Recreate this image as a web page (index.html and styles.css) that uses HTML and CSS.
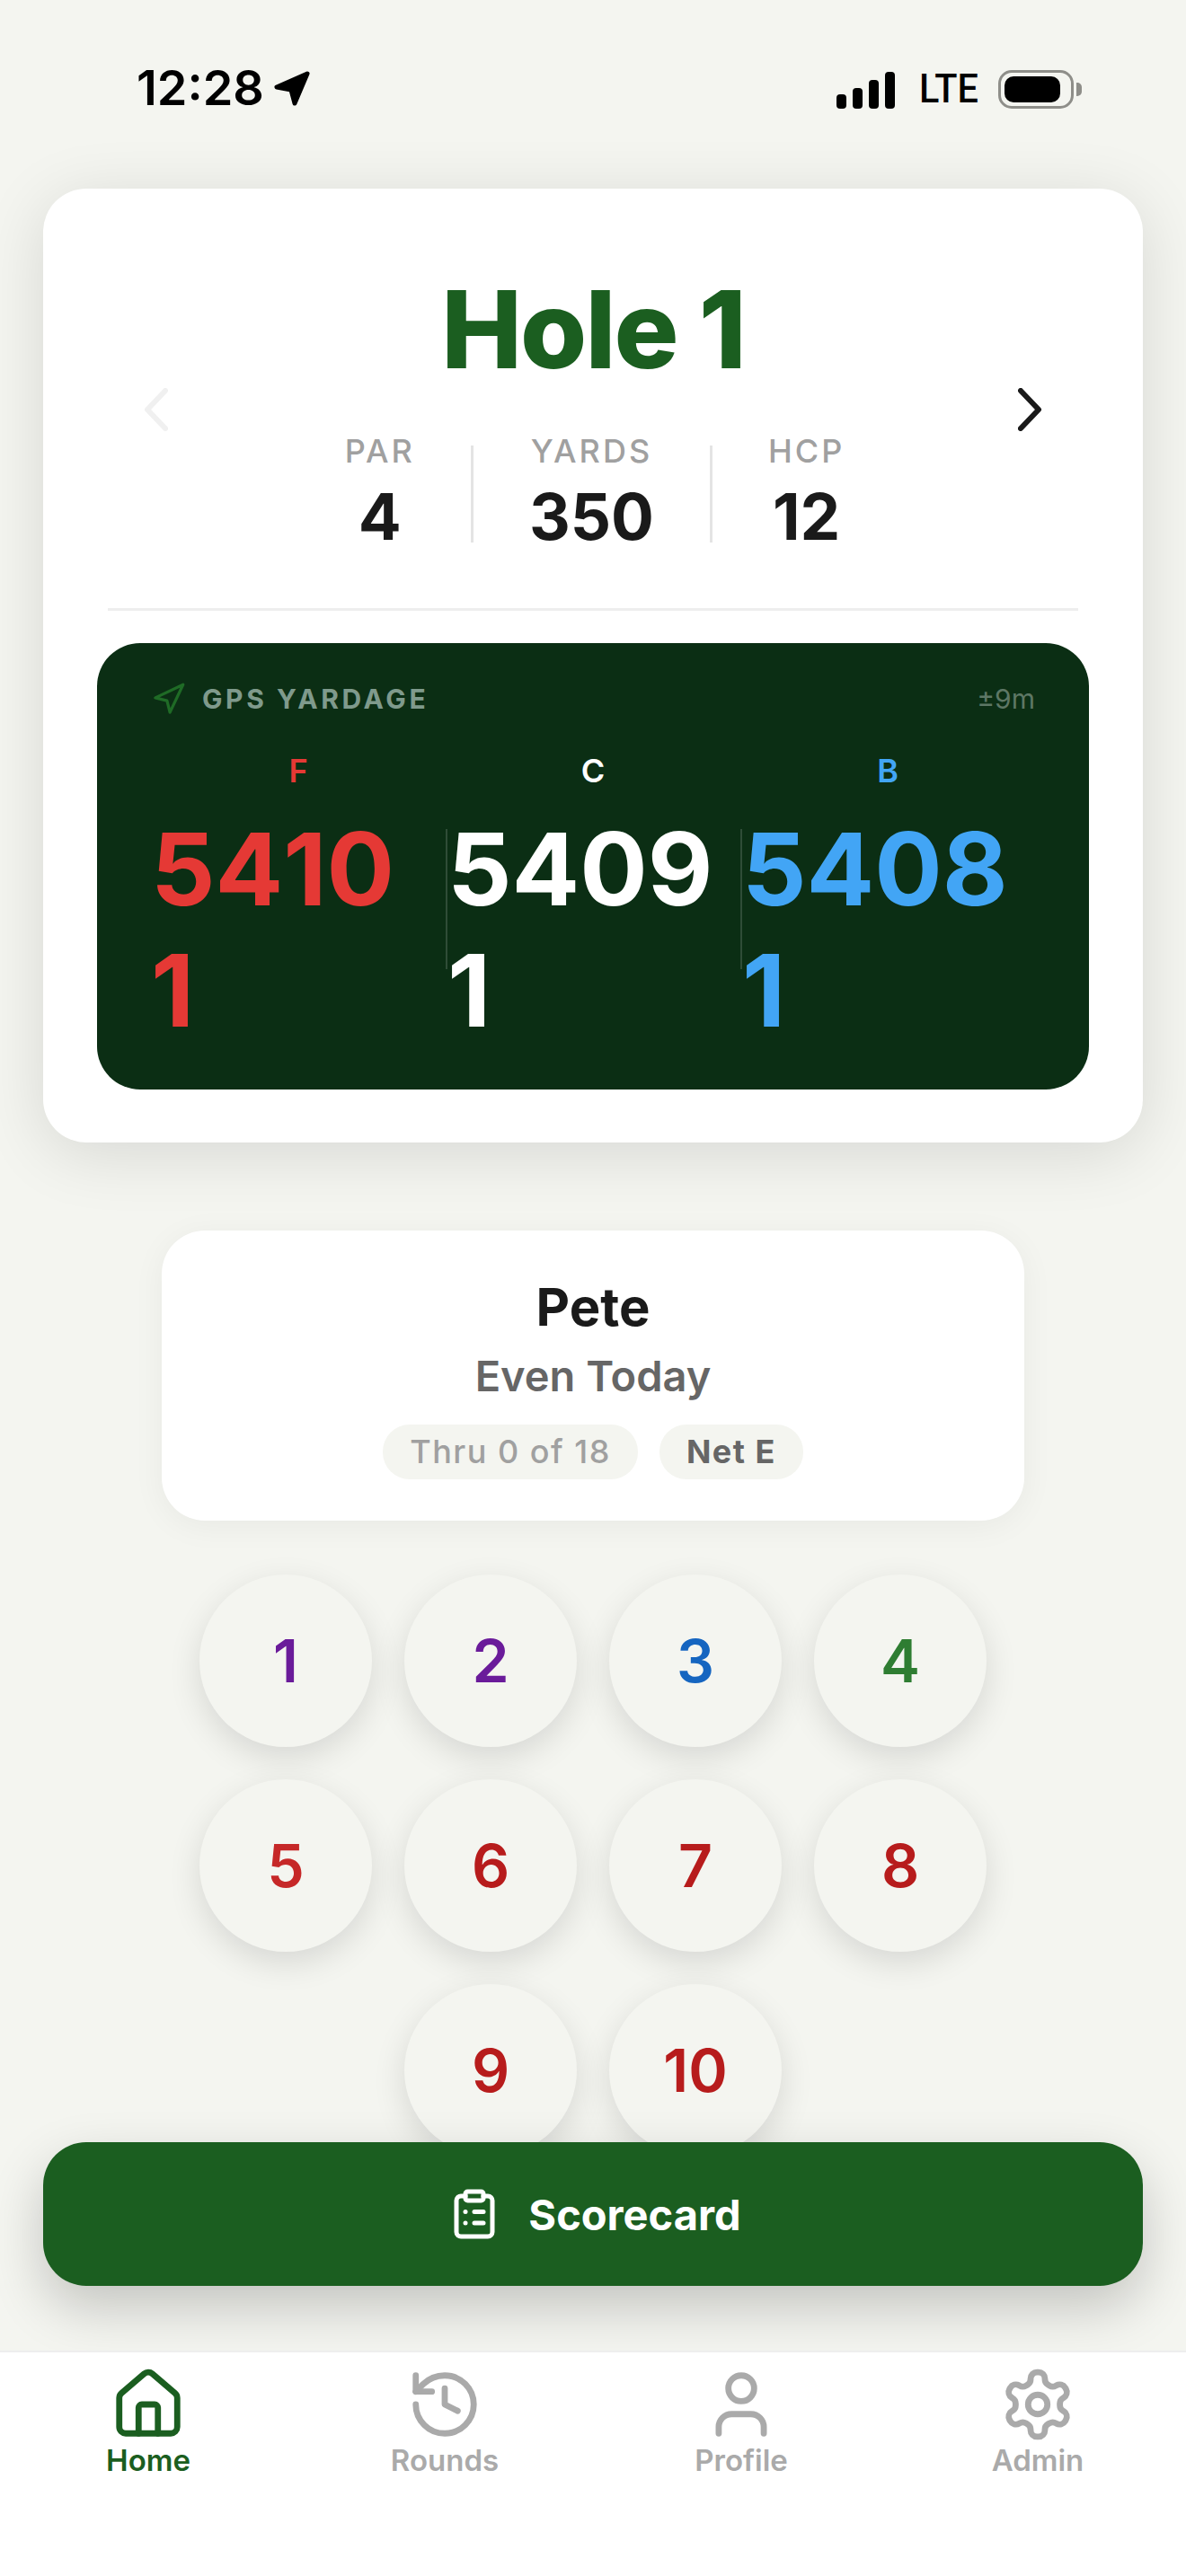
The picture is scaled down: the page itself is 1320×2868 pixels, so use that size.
FILE: index.html
```html
<!DOCTYPE html>
<html lang="en">
<head>
    <meta charset="UTF-8">
    <meta name="viewport" content="width=device-width, initial-scale=1.0">
    <title>Hole 1</title>
    <link rel="stylesheet" href="styles.css">
</head>
<body>
    <div class="screen">
        <main class="content">
            <div class="status-bar">
                <div class="status-left">
                    <span class="clock">12:28</span>
                    <svg class="loc-arrow" viewBox="0 0 42 42"><polygon points="38,5 4,20 20,23 24,38"/></svg>
                </div>
                <div class="status-right">
                    <div class="signal">
                        <span class="bar bar-1"></span>
                        <span class="bar bar-2"></span>
                        <span class="bar bar-3"></span>
                        <span class="bar bar-4"></span>
                    </div>
                    <span class="lte">LTE</span>
                    <div class="battery"><span class="battery-level"></span></div>
                    <span class="battery-nub"></span>
                </div>
            </div>

            <section class="hole-card">
                <svg class="chevron chevron-prev" viewBox="0 0 27 48"><path d="M24 3 L4 24 L24 45"/></svg>
                <svg class="chevron chevron-next" viewBox="0 0 27 48"><path d="M3 3 L23 24 L3 45"/></svg>

                <h1 class="hole-title">Hole 1</h1>

                <div class="stats">
                    <div class="stat">
                        <div class="stat-label">PAR</div>
                        <div class="stat-value">4</div>
                    </div>
                    <div class="stat-divider"></div>
                    <div class="stat">
                        <div class="stat-label">YARDS</div>
                        <div class="stat-value">350</div>
                    </div>
                    <div class="stat-divider"></div>
                    <div class="stat">
                        <div class="stat-label">HCP</div>
                        <div class="stat-value">12</div>
                    </div>
                </div>

                <div class="hole-rule"></div>

                <div class="gps-card">
                    <div class="gps-head">
                        <div class="gps-title">
                            <svg class="gps-icon" viewBox="0 0 24 24"><polygon points="3 11 22 2 13 21 11 13 3 11"/></svg>
                            <span>GPS YARDAGE</span>
                        </div>
                        <span class="gps-accuracy">±9m</span>
                    </div>
                    <div class="gps-labels">
                        <span class="gps-label front">F</span>
                        <span class="gps-label center">C</span>
                        <span class="gps-label back">B</span>
                    </div>
                    <div class="gps-row">
                        <div class="gps-col"><div class="gps-num front">54101</div></div>
                        <div class="gps-col"><div class="gps-num center">54091</div></div>
                        <div class="gps-col"><div class="gps-num back">54081</div></div>
                    </div>
                </div>
            </section>

            <section class="player-card">
                <div class="player-name">Pete</div>
                <div class="player-score">Even Today</div>
                <div class="pills">
                    <span class="pill">Thru 0 of 18</span>
                    <span class="pill pill-net">Net E</span>
                </div>
            </section>

            <div class="score-pad">
                <button class="score-btn purple">1</button>
                <button class="score-btn purple">2</button>
                <button class="score-btn blue">3</button>
                <button class="score-btn green">4</button>
                <button class="score-btn red-light">5</button>
                <button class="score-btn red">6</button>
                <button class="score-btn red">7</button>
                <button class="score-btn red">8</button>
                <button class="score-btn red">9</button>
                <button class="score-btn red">10</button>
            </div>

            <button class="scorecard-btn">
                <svg class="scorecard-icon" viewBox="0 0 24 24">
                    <rect x="8" y="2" width="8" height="4" rx="1"/>
                    <path d="M16 4h2a2 2 0 0 1 2 2v14a2 2 0 0 1-2 2H6a2 2 0 0 1-2-2V6a2 2 0 0 1 2-2h2"/>
                    <path d="M12 11h4"/>
                    <path d="M12 16h4"/>
                    <path d="M8 11h.01"/>
                    <path d="M8 16h.01"/>
                </svg>
                <span>Scorecard</span>
            </button>
        </main>

        <nav class="tabs">
            <div class="tab active">
                <svg class="tab-icon" viewBox="0 0 24 24">
                    <path d="M15 21v-8a1 1 0 0 0-1-1h-4a1 1 0 0 0-1 1v8"/>
                    <path d="M3 10a2 2 0 0 1 .709-1.528l7-5.999a2 2 0 0 1 2.582 0l7 5.999A2 2 0 0 1 21 10v9a2 2 0 0 1-2 2H5a2 2 0 0 1-2-2z"/>
                </svg>
                <span>Home</span>
            </div>
            <div class="tab">
                <svg class="tab-icon" viewBox="0 0 24 24">
                    <path d="M3 12a9 9 0 1 0 9-9 9.75 9.75 0 0 0-6.74 2.74L3 8"/>
                    <path d="M3 3v5h5"/>
                    <path d="M12 7v5l4 2"/>
                </svg>
                <span>Rounds</span>
            </div>
            <div class="tab">
                <svg class="tab-icon" viewBox="0 0 24 24">
                    <path d="M19 21v-2a4 4 0 0 0-4-4H9a4 4 0 0 0-4 4v2"/>
                    <circle cx="12" cy="7" r="4"/>
                </svg>
                <span>Profile</span>
            </div>
            <div class="tab">
                <svg class="tab-icon" viewBox="0 0 24 24">
                    <path d="M12.22 2h-.44a2 2 0 0 0-2 2v.18a2 2 0 0 1-1 1.73l-.43.25a2 2 0 0 1-2 0l-.15-.08a2 2 0 0 0-2.73.73l-.22.38a2 2 0 0 0 .73 2.73l.15.1a2 2 0 0 1 1 1.72v.51a2 2 0 0 1-1 1.74l-.15.09a2 2 0 0 0-.73 2.73l.22.38a2 2 0 0 0 2.73.73l.15-.08a2 2 0 0 1 2 0l.43.25a2 2 0 0 1 1 1.73V20a2 2 0 0 0 2 2h.44a2 2 0 0 0 2-2v-.18a2 2 0 0 1 1-1.73l.43-.25a2 2 0 0 1 2 0l.15.08a2 2 0 0 0 2.73-.73l.22-.39a2 2 0 0 0-.73-2.73l-.15-.08a2 2 0 0 1-1-1.74v-.5a2 2 0 0 1 1-1.74l.15-.09a2 2 0 0 0 .73-2.73l-.22-.38a2 2 0 0 0-2.73-.73l-.15.08a2 2 0 0 1-2 0l-.43-.25a2 2 0 0 1-1-1.73V4a2 2 0 0 0-2-2z"/>
                    <circle cx="12" cy="12" r="3"/>
                </svg>
                <span>Admin</span>
            </div>
        </nav>
    </div>
</body>
</html>
```

FILE: styles.css
```css
* {
    box-sizing: border-box;
}

body {
    margin: 0;
    font-family: Inter, "Noto Sans", sans-serif;
    background-color: #f4f5f0;
    color: #1a1a1a;
}

.screen {
    width: 1320px;
    height: 2868px;
    overflow: hidden;
    display: flex;
    flex-direction: column;
}

.content {
    position: relative;
    height: 2617px;
    flex-shrink: 0;
}

/* status bar */
.status-bar {
    height: 210px;
    padding: 70px 116px 0 152px;
    display: flex;
    justify-content: space-between;
    align-items: flex-start;
}

.status-left {
    display: flex;
    align-items: center;
    gap: 10px;
}

.clock {
    font-size: 54px;
    font-weight: 600;
    line-height: 56px;
    color: #000;
}

.loc-arrow {
    width: 42px;
    height: 42px;
}

.loc-arrow polygon {
    fill: #000;
    stroke: #000;
    stroke-width: 5;
    stroke-linejoin: round;
}

.status-right {
    display: flex;
    align-items: center;
    height: 48px;
    position: relative;
    top: 5px;
}

.signal {
    display: flex;
    align-items: flex-end;
    gap: 7px;
    height: 41px;
    margin-top: 2px;
}

.bar {
    width: 11px;
    background-color: #000;
    border-radius: 4px;
}

.bar-1 { height: 16px; }
.bar-2 { height: 23px; }
.bar-3 { height: 32px; }
.bar-4 { height: 41px; }

.lte {
    font-family: Roboto, sans-serif;
    font-size: 45px;
    font-weight: 500;
    line-height: 48px;
    color: #000;
    width: 61px;
    margin: 0 27px 0 27px;
    display: inline-block;
    transform: scaleX(0.92);
    transform-origin: left center;
}

.battery {
    width: 84px;
    height: 43px;
    border: 3px solid #8e8e89;
    border-radius: 15px;
    padding: 4px;
}

.battery-level {
    display: block;
    width: 62px;
    height: 29px;
    background-color: #000;
    border-radius: 10px;
}

.battery-nub {
    width: 6px;
    height: 15px;
    margin-left: 3px;
    background-color: #8e8e89;
    border-radius: 0 5px 5px 0;
}

/* hole card */
.hole-card {
    position: relative;
    height: 1062px;
    margin: 0 48px;
    padding: 88px 60px 0;
    background-color: #fff;
    border-radius: 48px;
    box-shadow: 0 12px 72px rgba(0, 0, 0, 0.12);
}

.chevron {
    position: absolute;
    top: 222px;
    width: 27px;
    height: 48px;
    fill: none;
    stroke-width: 6;
    stroke-linecap: round;
    stroke-linejoin: round;
}

.chevron-prev {
    left: 112px;
    stroke: #f0f0f0;
}

.chevron-next {
    right: 112px;
    stroke: #1a1a1a;
}

.hole-title {
    margin: 0;
    font-size: 120px;
    font-weight: 800;
    line-height: 138px;
    letter-spacing: -2px;
    text-align: center;
    color: #1b5e20;
}

.stats {
    display: flex;
    justify-content: center;
    align-items: center;
    margin-top: 45px;
    padding-left: 4px;
}

.stat {
    padding: 0 62px;
    text-align: center;
}

.stat-label {
    font-size: 36px;
    font-weight: 500;
    line-height: 42px;
    letter-spacing: 3px;
    color: #a0a0a0;
}

.stat-value {
    margin-top: 10px;
    font-size: 71px;
    font-weight: 700;
    line-height: 85px;
    color: #1a1a1a;
}

.stat-divider {
    width: 3px;
    height: 108px;
    background-color: #e4e4e4;
}

.hole-rule {
    height: 3px;
    margin: 59px 12px 0;
    background-color: #eeeeee;
}

.gps-card {
    height: 497px;
    margin-top: 36px;
    padding: 44px 60px 0;
    background-color: #0b2e14;
    border-radius: 48px;
}

.gps-head {
    display: flex;
    justify-content: space-between;
    align-items: center;
    height: 36px;
}

.gps-title {
    display: flex;
    align-items: center;
    gap: 18px;
    font-size: 30px;
    font-weight: 700;
    letter-spacing: 3.6px;
    color: #7f9a8c;
}

.gps-icon {
    width: 39px;
    height: 39px;
    fill: none;
    stroke: #1f6b26;
    stroke-width: 2;
    stroke-linejoin: round;
    stroke-linecap: round;
}

.gps-accuracy {
    font-size: 30px;
    color: #5d7765;
}

.gps-labels {
    display: grid;
    grid-template-columns: repeat(3, 1fr);
    margin-top: 40px;
    text-align: center;
}

.gps-label {
    font-size: 36px;
    font-weight: 600;
    line-height: 44px;
}

.gps-row {
    display: grid;
    grid-template-columns: repeat(3, 1fr);
    height: 156px;
    margin-top: 43px;
}

.gps-col {
    height: 156px;
    padding-right: 30px;
}

.gps-col + .gps-col {
    border-left: 2px solid rgba(255, 255, 255, 0.15);
    padding-right: 0;
}

.gps-num {
    margin-top: -23px;
    font-size: 112px;
    font-weight: 700;
    font-kerning: none;
    line-height: 135px;
    word-break: break-all;
}

.front { color: #e53935; }
.center { color: #ffffff; }
.back { color: #42a5f5; }

/* player card */
.player-card {
    width: 960px;
    height: 323px;
    margin: 98px auto 0;
    padding-top: 51px;
    background-color: #fff;
    border-radius: 48px;
    text-align: center;
    box-shadow: 0 6px 36px rgba(0, 0, 0, 0.05);
}

.player-name {
    font-size: 58px;
    font-weight: 700;
    line-height: 69px;
}

.player-score {
    margin-top: 12px;
    font-size: 47px;
    font-weight: 600;
    line-height: 60px;
    color: #666;
}

.pills {
    display: flex;
    justify-content: center;
    gap: 24px;
    margin-top: 24px;
}

.pill {
    height: 61px;
    padding: 0 30px;
    background-color: #f4f5f0;
    border-radius: 30px;
    font-size: 36px;
    font-weight: 500;
    line-height: 61px;
    letter-spacing: 1.5px;
    color: #a0a0a0;
}

.pill-net {
    font-weight: 700;
    color: #666;
}

/* score buttons */
.score-pad {
    width: 876px;
    margin: 60px auto 0;
    display: flex;
    flex-wrap: wrap;
    justify-content: center;
    gap: 36px;
}

.score-btn {
    width: 192px;
    height: 192px;
    padding: 0;
    border: none;
    border-radius: 50%;
    background-color: #f4f5f0;
    font-family: inherit;
    font-size: 66px;
    font-weight: 600;
    box-shadow: 0 12px 36px rgba(0, 0, 0, 0.12);
}

.purple { color: #6a1b9a; }
.blue { color: #1565c0; }
.green { color: #2e7d32; }
.red-light { color: #c62828; }
.red { color: #b71c1c; }

.scorecard-btn {
    position: absolute;
    left: 48px;
    top: 2385px;
    width: 1224px;
    height: 160px;
    padding: 0 0 0 3px;
    display: flex;
    justify-content: center;
    align-items: center;
    gap: 30px;
    border: none;
    border-radius: 48px;
    background-color: #1b5e20;
    color: #fff;
    font-family: inherit;
    font-size: 47px;
    font-weight: 700;
    box-shadow: 0 24px 60px rgba(0, 0, 0, 0.2);
}

.scorecard-icon {
    width: 60px;
    height: 60px;
    fill: none;
    stroke: #fff;
    stroke-width: 2;
    stroke-linecap: round;
    stroke-linejoin: round;
}

/* tab bar */
.tabs {
    height: 251px;
    display: grid;
    grid-template-columns: repeat(4, 1fr);
    background-color: #fff;
    border-top: 2px solid #eeeeee;
    position: relative;
}

.tab {
    display: flex;
    flex-direction: column;
    align-items: center;
    padding-top: 15px;
    font-size: 33px;
    font-weight: 600;
    line-height: 40px;
    color: #aaaaaa;
}

.tab span {
    margin-top: -1px;
}

.tab.active {
    color: #1b5e20;
}

.tab-icon {
    width: 86px;
    height: 86px;
    fill: none;
    stroke: currentColor;
    stroke-width: 1.9;
    stroke-linecap: round;
    stroke-linejoin: round;
}
```
